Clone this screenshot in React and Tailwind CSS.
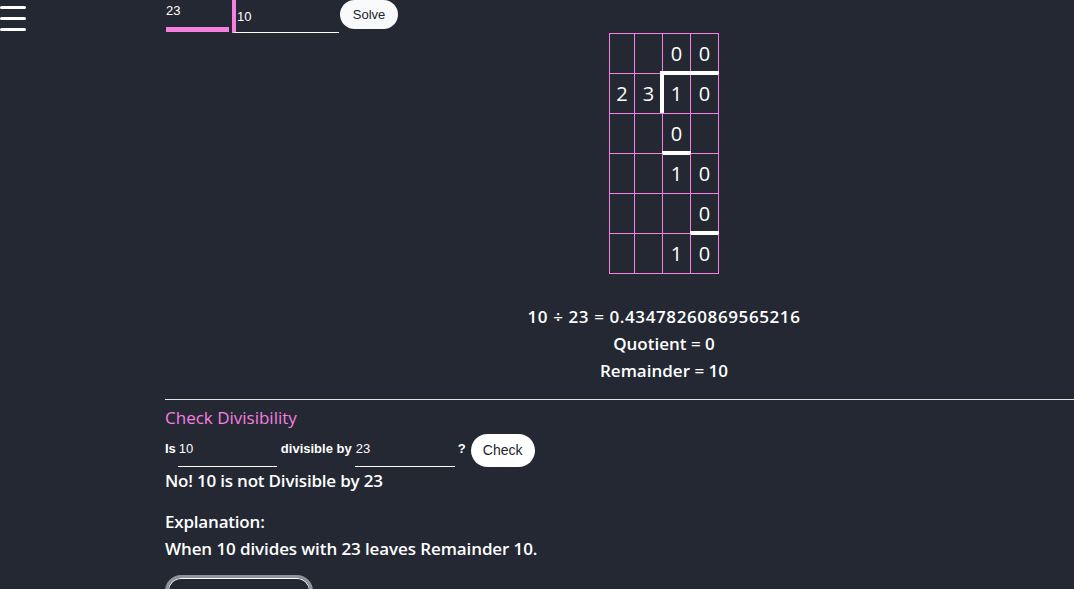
const rows = [
  ["", "", "0", "0"],
  ["2", "3", "1", "0"],
  ["", "", "0", ""],
  ["", "", "1", "0"],
  ["", "", "", "0"],
  ["", "", "1", "0"],
];

function Cell({ r, c, v }) {
  const w = c === 0 ? "w-[25px]" : "w-[28px]";
  return (
    <div className={`relative ${w} h-[40px] border-r border-b border-[#f77fe0] flex items-center justify-center text-[20px] leading-none`}>
      {v}
      {r === 1 && c === 2 && (
        <>
          <span className="absolute left-[-3px] top-[-3px] w-[59px] h-[4px] bg-white" />
          <span className="absolute left-[-3px] top-[-3px] w-[4px] h-[42px] bg-white" />
        </>
      )}
      {r === 2 && c === 2 && <span className="absolute left-[-1px] top-[37px] w-[29px] h-[4px] bg-white" />}
      {r === 4 && c === 3 && <span className="absolute left-[-1px] top-[37px] w-[29px] h-[4px] bg-white" />}
    </div>
  );
}

export default function App() {
  return (
    <div className="relative w-[1074px] h-[589px] overflow-hidden bg-[#232833] text-white font-['Liberation_Sans',Arial,sans-serif]">
      {/* hamburger */}
      <div className="absolute left-0 top-[6px] flex flex-col gap-[8px]">
        <div className="w-[26px] h-[3px] rounded-full bg-white" />
        <div className="w-[26px] h-[3px] rounded-full bg-white" />
        <div className="w-[26px] h-[3px] rounded-full bg-white" />
      </div>

      <div className="ml-[165px] w-[998px] flex flex-col">
        {/* top inputs */}
        <div className="flex items-start h-[33px] pl-[1px]">
          <div className="w-[63px] h-[32px] border-b-[5px] border-[#f77fe0] text-[13px] pt-[1px]">23</div>
          <div className="ml-[3px] w-[107px] h-[33px] border-l-[4px] border-l-[#f77fe0] border-b border-b-white text-[13px] pl-[1px] pt-[7px]">10</div>
          <button className="ml-[1px] w-[58px] h-[29px] rounded-full bg-[#f8f9fa] text-[#212529] text-[13px]">Solve</button>
        </div>

        {/* long division grid */}
        <div className="flex justify-center font-['Open_Sans',sans-serif]">
          <div className="border-l border-t border-[#f77fe0] flex flex-col">
            {rows.map((row, r) => (
              <div key={r} className="flex">
                {row.map((v, c) => (
                  <Cell key={c} r={r} c={c} v={v} />
                ))}
              </div>
            ))}
          </div>
        </div>

        <div className="font-['Open_Sans',sans-serif] flex flex-col">
          {/* results */}
          <div className="mt-[29px] flex flex-col items-center text-[17px] leading-[27px] font-semibold">
            <div className="tracking-[0.6px]">10 ÷ 23 = 0.43478260869565216</div>
            <div>Quotient = 0</div>
            <div>Remainder = 10</div>
          </div>

          <div className="mt-[15px] h-px bg-[#e5e5e5]" />

          <div className="mt-[6px] text-[17px] leading-[24px] text-[#f77fe0]">Check Divisibility</div>

          <div className="mt-[4px] flex items-end h-[33px] text-[13px] font-bold font-['Liberation_Sans',Arial,sans-serif]">
            <span className="mb-[9px]">Is</span>
            <div className="ml-[2px] w-[99px] border-b border-white font-normal pl-[1px] pb-[8px]">10</div>
            <span className="ml-[4px] mb-[9px]">divisible by</span>
            <div className="ml-[3px] w-[100px] border-b border-white font-normal pl-[1px] pb-[8px]">23</div>
            <span className="ml-[3px] mb-[9px]">?</span>
            <button className="ml-[5px] w-[64px] h-[33px] rounded-full bg-white text-[#212529] text-[14px] font-normal">Check</button>
          </div>

          <div className="mt-[2px] text-[17px] leading-[24px] font-semibold tracking-[-0.2px]">No! 10 is not Divisible by 23</div>

          <div className="mt-[17px] text-[17px] leading-[24px] font-semibold tracking-[-0.2px]">Explanation:</div>
          <div className="mt-[3px] text-[17px] leading-[24px] font-semibold tracking-[-0.1px]">When 10 divides with 23 leaves Remainder 10.</div>

          <div className="mt-[14px] w-[148px] h-[44px] rounded-[16px] border-[3px] border-[#8f949b] shadow-[inset_0_0_0_1px_white]" />
        </div>
      </div>
    </div>
  );
}
